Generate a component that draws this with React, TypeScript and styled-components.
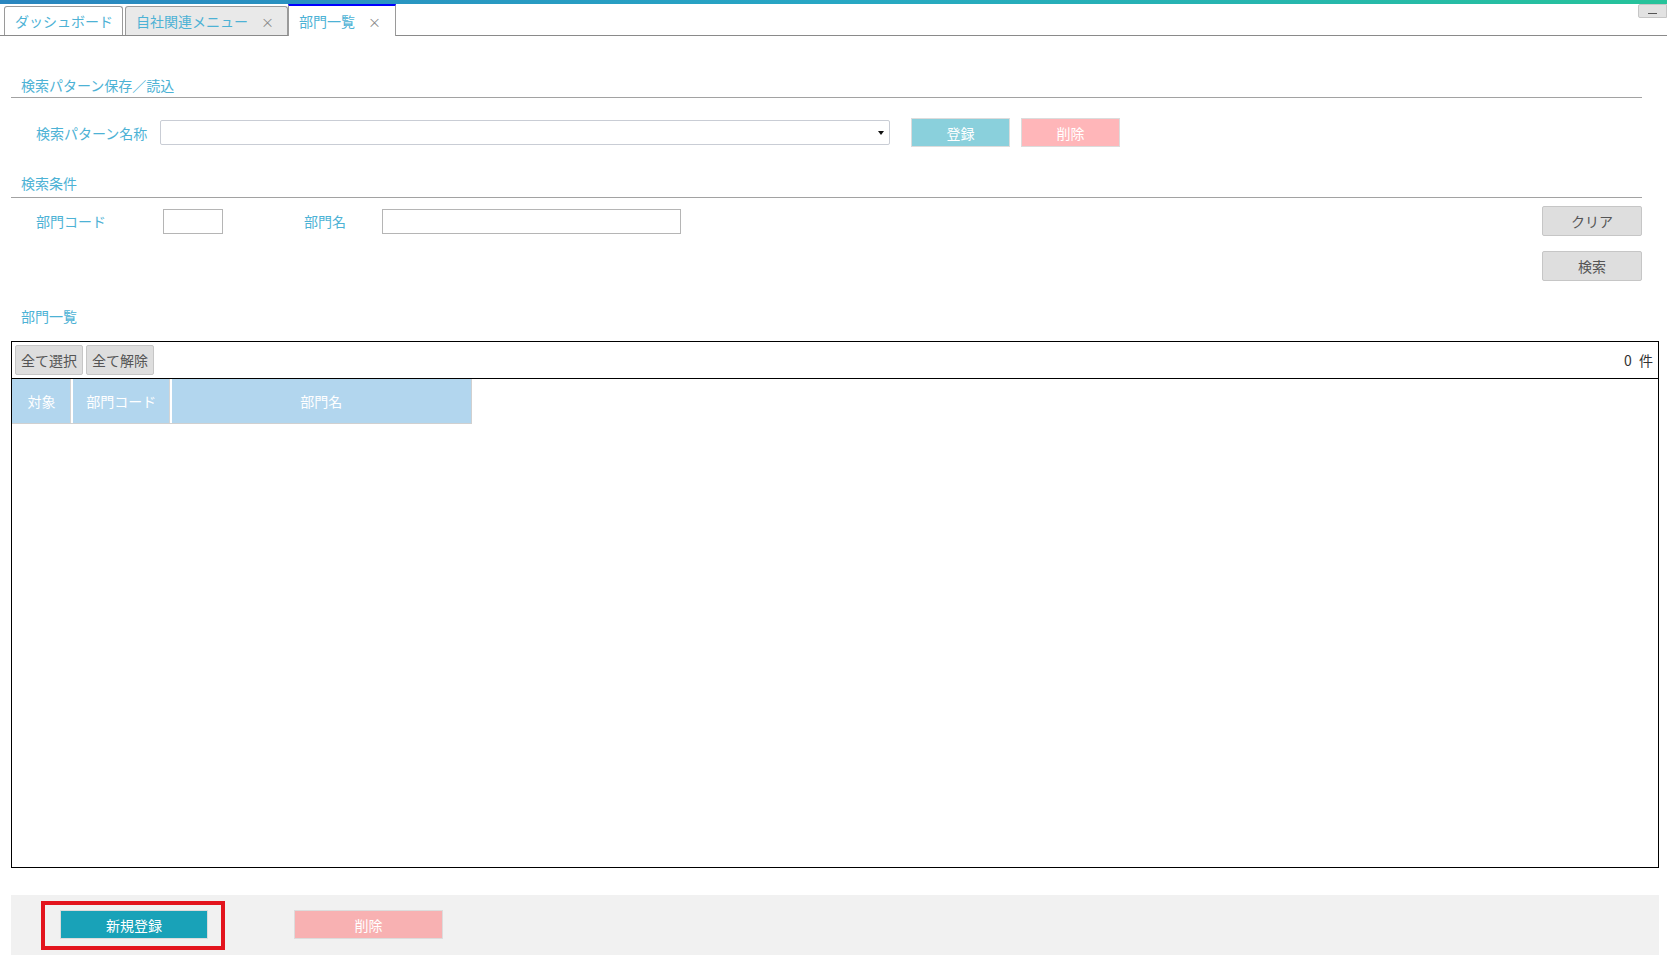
import React from 'react';
import styled, { createGlobalStyle } from 'styled-components';

const GlobalStyle = createGlobalStyle`
  html, body {
    margin: 0;
    padding: 0;
    background: #fff;
  }
  body {
    font-family: "Noto Sans CJK JP", "Noto Sans", sans-serif;
    font-size: 14px;
  }
  * {
    box-sizing: border-box;
  }
`;

const accent = '#4db2d5';

const Page = styled.div`
  width: 1667px;
  min-height: 961px;
  background: #fff;
`;

const TopBar = styled.div`
  height: 4px;
  background: linear-gradient(90deg, #2a86bf 0%, #27a7c4 50%, #26c39a 100%);
`;

const TabStrip = styled.div`
  display: flex;
  align-items: flex-end;
  height: 32px;
  padding-left: 4px;
  border-bottom: 1px solid #8a8a8a;
`;

const Tab = styled.div<{ $w: number; $bg?: string; $active?: boolean; $ml?: number }>`
  display: flex;
  align-items: center;
  width: ${p => p.$w}px;
  height: ${p => (p.$active ? 32 : 29)}px;
  margin-left: ${p => p.$ml ?? 0}px;
  margin-bottom: ${p => (p.$active ? -1 : 0)}px;
  padding: 0 0 0 10px;
  background: ${p => p.$bg ?? '#fff'};
  border: 1px solid #9a9a9a;
  border-top: ${p => (p.$active ? '2px solid #0000ff' : '1px solid #9a9a9a')};
  border-bottom: none;
  border-radius: ${p => (p.$active ? '0' : '3px 3px 0 0')};
  color: ${accent};
  font-size: 14px;
  white-space: nowrap;
`;

const TabClose = styled.span`
  margin-left: 13px;
  color: #8a8a8a;
  font-size: 13px;
  line-height: 1;
`;

const MinButton = styled.div`
  align-self: flex-start;
  margin-left: auto;
  width: 29px;
  height: 14px;
  background: #e2e2e2;
  border: 1px solid #c6c6c6;
  border-radius: 2px 0 0 2px;
  display: flex;
  align-items: flex-end;
  justify-content: center;
  padding-bottom: 3px;

  &::after {
    content: '';
    width: 9px;
    height: 1px;
    background: #555;
  }
`;

const Content = styled.div`
  padding-left: 11px;
  width: 1659px;
`;

const SectionHeader = styled.div<{ $mt: number; $h?: number; $line?: boolean }>`
  width: 1631px;
  height: ${p => p.$h ?? 23}px;
  margin-top: ${p => p.$mt}px;
  padding-left: 10px;
  line-height: 20px;
  color: ${accent};
  font-size: 14px;
  border-bottom: ${p => (p.$line ? '1px solid #a2a2a2' : 'none')};
`;

const PatternRow = styled.div`
  display: flex;
  align-items: center;
  height: 29px;
  margin-top: 20px;
  padding-left: 25px;
`;

const Label = styled.span<{ $w: number }>`
  width: ${p => p.$w}px;
  flex-shrink: 0;
  color: ${accent};
  font-size: 14px;
`;

const SelectBox = styled.div`
  position: relative;
  width: 730px;
  height: 25px;
  border: 1px solid #c9cdd5;
  border-radius: 2px;
  background: #fff;

  &::after {
    content: '';
    position: absolute;
    right: 5px;
    top: 10px;
    border-left: 3px solid transparent;
    border-right: 3px solid transparent;
    border-top: 4px solid #111;
  }
`;

const ColorButton = styled.button<{ $bg: string; $w: number; $ml?: number; $mt?: number }>`
  width: ${p => p.$w}px;
  height: 29px;
  margin-left: ${p => p.$ml ?? 0}px;
  margin-top: ${p => p.$mt ?? 0}px;
  background: ${p => p.$bg};
  border: 1px solid #dcdcdc;
  color: #fff;
  font-family: inherit;
  font-size: 14px;
  padding: 0;
`;

const SearchArea = styled.div`
  display: flex;
  justify-content: space-between;
  width: 1631px;
  padding-top: 8px;
`;

const FieldRow = styled.div`
  display: flex;
  align-items: center;
  height: 30px;
  padding-left: 25px;
`;

const TextInput = styled.div<{ $w: number; $mr?: number }>`
  width: ${p => p.$w}px;
  height: 25px;
  margin-right: ${p => p.$mr ?? 0}px;
  border: 1px solid #b5b5b5;
  background: #fff;
`;

const ButtonColumn = styled.div`
  display: flex;
  flex-direction: column;
  gap: 15px;
`;

const GrayButton = styled.button<{ $w: number; $h: number }>`
  width: ${p => p.$w}px;
  height: ${p => p.$h}px;
  background: #dedede;
  border: 1px solid #c6c6c6;
  border-radius: 2px;
  color: #555;
  font-family: inherit;
  font-size: 14px;
  padding: 0;
`;

const ListBox = styled.div`
  width: 1648px;
  height: 527px;
  margin-top: 12px;
  border: 1px solid #000;
  background: #fff;
`;

const ListToolbar = styled.div`
  display: flex;
  align-items: center;
  gap: 3px;
  height: 37px;
  padding: 0 5px 0 3px;
  border-bottom: 1px solid #000;
`;

const Count = styled.span`
  margin-left: auto;
  color: #333;
  font-size: 14px;
  word-spacing: 4px;
`;

const HeaderRow = styled.div`
  display: flex;
  height: 45px;
  width: 460px;
  border-right: 1px solid #d0d0d0;
  border-bottom: 1px solid #d0d0d0;
`;

const HeaderCell = styled.div<{ $w: number }>`
  width: ${p => p.$w}px;
  display: flex;
  align-items: center;
  justify-content: center;
  background: #b2d6ee;
  color: #fff;
  font-size: 14px;
  border-right: 2px solid #fff;
  box-shadow: inset -1px 0 0 #d4d4d4;

  &:last-child {
    border-right: none;
    box-shadow: none;
  }
`;

const Footer = styled.div`
  display: flex;
  align-items: flex-start;
  width: 1648px;
  height: 60px;
  margin-top: 27px;
  padding: 6px 0 0 30px;
  background: #f1f1f1;
`;

const Highlight = styled.div`
  width: 184px;
  height: 49px;
  padding: 5px 0 0 15px;
  border: 4px solid #e3141d;
`;

export default function App() {
  return (
    <Page>
      <GlobalStyle />
      <TopBar />
      <TabStrip>
        <Tab $w={119}>ダッシュボード</Tab>
        <Tab $w={163} $ml={2} $bg="#e9e9e9">
          自社関連メニュー<TabClose>×</TabClose>
        </Tab>
        <Tab $w={108} $active>
          部門一覧<TabClose>×</TabClose>
        </Tab>
        <MinButton />
      </TabStrip>

      <Content>
        <SectionHeader $mt={39} $line>検索パターン保存／読込</SectionHeader>
        <PatternRow>
          <Label $w={124}>検索パターン名称</Label>
          <SelectBox />
          <ColorButton $bg="#8ad0dc" $w={99} $ml={21}>登録</ColorButton>
          <ColorButton $bg="#ffb6b9" $w={99} $ml={11}>削除</ColorButton>
        </PatternRow>

        <SectionHeader $mt={26} $h={25} $line>検索条件</SectionHeader>
        <SearchArea>
          <FieldRow>
            <Label $w={127}>部門コード</Label>
            <TextInput $w={60} $mr={81} />
            <Label $w={78}>部門名</Label>
            <TextInput $w={299} />
          </FieldRow>
          <ButtonColumn>
            <GrayButton $w={100} $h={30}>クリア</GrayButton>
            <GrayButton $w={100} $h={30}>検索</GrayButton>
          </ButtonColumn>
        </SearchArea>

        <SectionHeader $mt={25}>部門一覧</SectionHeader>
        <ListBox>
          <ListToolbar>
            <GrayButton $w={68} $h={30}>全て選択</GrayButton>
            <GrayButton $w={68} $h={30}>全て解除</GrayButton>
            <Count>0 件</Count>
          </ListToolbar>
          <HeaderRow>
            <HeaderCell $w={61}>対象</HeaderCell>
            <HeaderCell $w={99}>部門コード</HeaderCell>
            <HeaderCell $w={300}>部門名</HeaderCell>
          </HeaderRow>
        </ListBox>

        <Footer>
          <Highlight>
            <ColorButton $bg="#19a2b8" $w={148}>新規登録</ColorButton>
          </Highlight>
          <ColorButton $bg="#f8b1b2" $w={149} $ml={69} $mt={9}>削除</ColorButton>
        </Footer>
      </Content>
    </Page>
  );
}
